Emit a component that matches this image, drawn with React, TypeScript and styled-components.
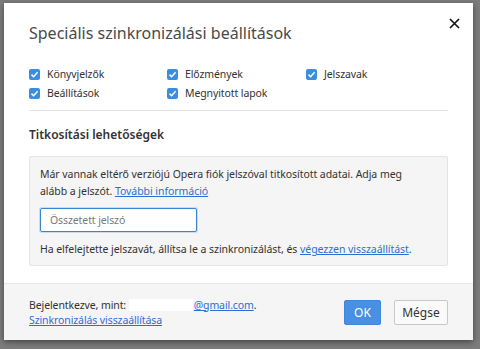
import styled, { createGlobalStyle } from 'styled-components';

const GlobalStyle = createGlobalStyle`
  html, body {
    margin: 0;
    padding: 0;
    background: #7c7c7c;
    font-family: "Noto Sans", "Open Sans", sans-serif;
  }
`;

const Backdrop = styled.div`
  width: 480px;
  height: 349px;
  padding: 3px 0 0 4px;
  box-sizing: border-box;
  background: #7c7c7c;
`;

const Dialog = styled.div`
  width: 469px;
  height: 337px;
  background: #fff;
  box-shadow: 0 2px 6px rgba(0, 0, 0, 0.45);
  display: flex;
  flex-direction: column;
  position: relative;
`;

const Body = styled.div`
  flex: 1;
  padding: 19px 25px 0 25px;
`;

const Title = styled.h1`
  margin: 0;
  font-size: 16px;
  font-weight: 400;
  color: #4a4a4a;
  line-height: 22px;
`;

const Close = styled.button`
  position: absolute;
  top: 10px;
  right: 9px;
  width: 20px;
  height: 20px;
  border: 0;
  padding: 0;
  background: none;
  display: flex;
  align-items: center;
  justify-content: center;
`;

const CheckGrid = styled.div`
  display: grid;
  grid-template-columns: 138px 139px auto;
  row-gap: 3px;
  margin-top: 22px;
  padding-bottom: 9px;
  border-bottom: 1px solid #e3e3e3;
`;

const CheckItem = styled.label`
  display: flex;
  align-items: center;
  gap: 7px;
  font-size: 10.5px;
  letter-spacing: -0.1px;
  line-height: 16px;
  color: #333;
`;

const Box = styled.span`
  width: 11px;
  height: 11px;
  border-radius: 2px;
  background: #3b8de0;
  display: flex;
  align-items: center;
  justify-content: center;
  flex-shrink: 0;
`;

const Section = styled.h2`
  margin: 15px 0 12px;
  font-size: 12px;
  font-weight: 600;
  color: #333;
  line-height: 18px;
`;

const Panel = styled.div`
  background: #f5f5f5;
  border: 1px solid #e4e4e4;
  border-radius: 2px;
  padding: 9px 10px 7px 10px;
  font-size: 10.5px;
  letter-spacing: -0.05px;
  line-height: 17px;
  color: #333;
`;

const Para = styled.p`
  margin: 0;
`;

const Link = styled.a`
  color: #2d6fd0;
  text-decoration: underline;
`;

const Input = styled.input`
  display: block;
  box-sizing: border-box;
  width: 157px;
  height: 24px;
  margin: 8px 0 9px;
  padding: 0 9px;
  border: 1px solid #3a84d6;
  border-radius: 2px;
  background: #fff;
  box-shadow: 0 0 0 1px rgba(74, 144, 226, 0.25);
  font: inherit;
  font-size: 10.5px;
  letter-spacing: -0.1px;
  color: #333;
  &::placeholder {
    color: #7a7a7a;
  }
`;

const Footer = styled.div`
  height: 56px;
  background: #f5f5f5;
  border-top: 1px solid #e6e6e6;
  padding: 0 25px;
  display: flex;
  align-items: center;
  justify-content: space-between;
`;

const Info = styled.div`
  font-size: 10.5px;
  letter-spacing: -0.1px;
  line-height: 15px;
  color: #333;
  padding-top: 1px;
`;

const Redacted = styled.span`
  display: inline-block;
  width: 64px;
  height: 12px;
  background: #fff;
  vertical-align: -2px;
  margin-right: 1px;
`;

const Buttons = styled.div`
  display: flex;
  gap: 13px;
`;

const Button = styled.button<{ $primary?: boolean }>`
  height: 25px;
  padding: 0;
  width: ${(p) => (p.$primary ? '37px' : '54px')};
  border-radius: 2px;
  font-family: inherit;
  font-size: 12px;
  border: 1px solid ${(p) => (p.$primary ? '#3d86db' : '#c8c8c8')};
  background: ${(p) => (p.$primary ? '#4a90e2' : '#fafafa')};
  color: ${(p) => (p.$primary ? '#fff' : '#333')};
`;

const Check = () => (
  <Box>
    <svg width="9" height="9" viewBox="0 0 9 9">
      <path d="M1.5 4.6 L3.6 6.7 L7.6 2.2" fill="none" stroke="#fff" strokeWidth="1.5" />
    </svg>
  </Box>
);

const items = [
  'Könyvjelzők',
  'Előzmények',
  'Jelszavak',
  'Beállítások',
  'Megnyitott lapok',
];

export default function App() {
  return (
    <>
      <GlobalStyle />
      <Backdrop>
        <Dialog>
          <Close aria-label="close">
            <svg width="11" height="11" viewBox="0 0 11 11">
              <path d="M1 1 L10 10 M10 1 L1 10" stroke="#111" strokeWidth="1.6" />
            </svg>
          </Close>
          <Body>
            <Title>Speciális szinkronizálási beállítások</Title>
            <CheckGrid>
              {items.map((t) => (
                <CheckItem key={t}>
                  <Check />
                  {t}
                </CheckItem>
              ))}
            </CheckGrid>
            <Section>Titkosítási lehetőségek</Section>
            <Panel>
              <Para>
                Már vannak eltérő verziójú Opera fiók jelszóval titkosított adatai. Adja meg
                <br />
                alább a jelszót. <Link>További információ</Link>
              </Para>
              <Input placeholder="Összetett jelszó" />
              <Para>
                Ha elfelejtette jelszavát, állítsa le a szinkronizálást, és{' '}
                <Link>végezzen visszaállítást</Link>.
              </Para>
            </Panel>
          </Body>
          <Footer>
            <Info>
              Bejelentkezve, mint: <Redacted />
              <Link>@gmail.com</Link>.
              <br />
              <Link>Szinkronizálás visszaállítása</Link>
            </Info>
            <Buttons>
              <Button $primary>OK</Button>
              <Button>Mégse</Button>
            </Buttons>
          </Footer>
        </Dialog>
      </Backdrop>
    </>
  );
}
